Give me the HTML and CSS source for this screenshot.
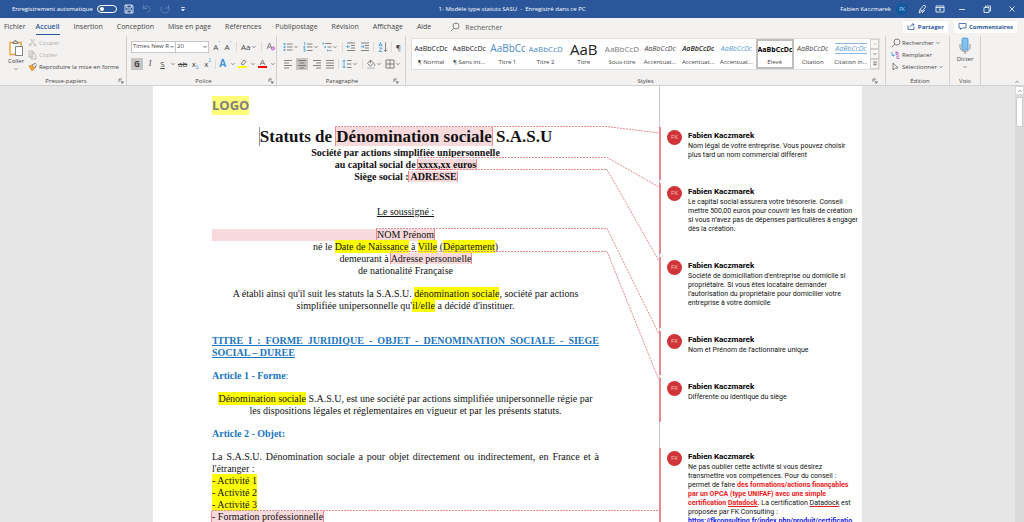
FILE: index.html
```
<!DOCTYPE html>
<html lang="fr">
<head>
<meta charset="utf-8">
<title>1- Modèle type statuts SASU</title>
<link rel="stylesheet" href="styles.css">
</head>
<body>
<svg class="defs" aria-hidden="true">
  <symbol id="chev" viewBox="0 0 6 6"><path d="M1.5 2.2 3 3.7 4.500 2.200"/></symbol>
  <symbol id="launch" viewBox="0 0 6 6"><path d="M1 4V1h3M2.500 2.500 5 5M5 3v2H3"/></symbol>
  <symbol id="list" viewBox="0 0 10 10"><path class="b" d="M.5 2h2M.5 5h2M.5 8h2" stroke-width="1.600"/><path d="M4 2h5.500M4 5h5.500M4 8h5.500"/></symbol>
  <symbol id="num" viewBox="0 0 10 10"><path class="b" d="M1 .5h.8v2.500M.6 4.500h1.500L.6 6h1.600M.6 7.300h1.500v2H.6"/><path d="M4 2h5.500M4 5h5.500M4 8.500h5.500"/></symbol>
  <symbol id="multi" viewBox="0 0 10 10"><path class="b" d="M.5 1.500h1.500M2.500 5h1.500M5 8.500h1.500" stroke-width="1.500"/><path d="M3 1.500h6.500M5.500 5h4M7.500 8.500h2"/></symbol>
  <symbol id="outdent" viewBox="0 0 10 10"><path d="M1 1h8M5 3.500h4M5 6h4M1 8.500h8"/><path class="b" d="M4 4.700H.8M2.300 3.200.8 4.700l1.500 1.500"/></symbol>
  <symbol id="indent" viewBox="0 0 10 10"><path d="M1 1h8M5 3.500h4M5 6h4M1 8.500h8"/><path class="b" d="M.8 4.700H4M2.500 3.200 4 4.700 2.500 6.200"/></symbol>
  <symbol id="sort" viewBox="0 0 10 10"><path class="b" d="M.8 4.500 2.500.5l1.700 4M1.300 3.200h2.400M1 6h3L1 9.500h3.200"/><path d="M7.500.5v9M5.800 7.700l1.700 1.800 1.700-1.800"/></symbol>
  <symbol id="al" viewBox="0 0 10 10"><path d="M1 1.500h8M1 4h5M1 6.500h8M1 9h5"/></symbol>
  <symbol id="ac" viewBox="0 0 10 10"><path d="M1 1.500h8M2.500 4h5M1 6.500h8M2.500 9h5"/></symbol>
  <symbol id="ar" viewBox="0 0 10 10"><path d="M1 1.500h8M4 4h5M1 6.500h8M4 9h5"/></symbol>
  <symbol id="aj" viewBox="0 0 10 10"><path d="M1 1.500h8M1 4h8M1 6.500h8M1 9h8"/></symbol>
  <symbol id="space" viewBox="0 0 10 10"><path class="b" d="M2 1v8M.6 2.500 2 1l1.400 1.500M.6 7.500 2 9l1.400-1.500"/><path d="M5 1.500h4.500M5 5h4.500M5 8.500h4.500"/></symbol>
  <symbol id="bucket" viewBox="0 0 10 10"><path d="M4.500 1 1.500 4.500l3 2.800 3-3.300zM4.500 1v3M8 4.500c1 1.500 1 2 .4 2.400"/><path d="M1 9.200h8" stroke="#c8c8c8" stroke-width="1.400"/></symbol>
  <symbol id="grid" viewBox="0 0 10 10"><path d="M1 1h8v8H1zM5 1v8M1 5h8"/></symbol>
  <symbol id="lens" viewBox="0 0 10 10"><circle cx="6" cy="4" r="3"/><path d="M3.800 6.200.8 9.200"/></symbol>
</svg>

<header class="titlebar">
  <div class="quick">
    <label class="autosave">Enregistrement automatique <input type="checkbox" class="toggle"></label>
    <button class="tb" aria-label="Enregistrer"><svg viewBox="0 0 10 10"><path d="M1 1h7l1 1v7H1zM2.800 1v3h4.500V1M2.800 9V6h4.500v3"/></svg></button>
    <button class="tb dim" aria-label="Annuler"><svg viewBox="0 0 10 10"><path d="M1.500 1v3.500H5M1.500 4.500C3 1.500 8 1.500 8 5c0 2-2 3-3 4"/></svg></button>
    <button class="tb dim" aria-label="Rétablir"><svg viewBox="0 0 10 10"><path d="M8.500 1v3H5.500M2 2.500C-.5 6 2 9 5 9c3.500 0 5-4 3-6"/></svg></button>
    <button class="tb" aria-label="Personnaliser"><svg viewBox="0 0 10 10"><path d="M3.200 3.500h3.600M3.500 5.500 5 7l1.500-1.500z"/></svg></button>
  </div>
  <div class="doctitle">1- Modèle type statuts SASU&nbsp; -&nbsp; Enregistré dans ce PC</div>
  <div class="account">
    <span>Fabien Kaczmarek</span><span class="me">FK</span>
    <button class="tb" aria-label="Stylet"><svg viewBox="0 0 10 10"><path d="M2 9 3 5.500 7 1l2 1.500L5.500 7zM3 5.500 5.500 7M5 9l3-3"/></svg></button>
    <button class="tb" aria-label="Options du ruban"><svg viewBox="0 0 10 10"><path d="M1 2h8v6H1zM1 3.500h8M5 7V4.700M4 5.700l1-1 1 1"/></svg></button>
    <button class="win" aria-label="Réduire"><svg viewBox="0 0 10 10"><path d="M2 5.500h6"/></svg></button>
    <button class="win" aria-label="Restaurer"><svg viewBox="0 0 10 10"><path d="M2 3.500h5v5H2zM3.500 3.500V2h5v5H7"/></svg></button>
    <button class="win" aria-label="Fermer"><svg viewBox="0 0 10 10"><path d="m2.500 2.500 5 5M7.500 2.500l-5 5"/></svg></button>
  </div>
</header>

<nav class="tabs">
  <button class="file">Fichier</button><button class="on">Accueil</button><button>Insertion</button><button>Conception</button><button>Mise en page</button><button>Références</button><button>Publipostage</button><button>Révision</button><button>Affichage</button><button>Aide</button>
  <label class="search"><svg class="i"><use href="#lens"/></svg><input type="text" placeholder="Rechercher" aria-label="Rechercher"></label>
  <div class="share">
    <button><svg class="i"><path d="M1 3.500v4h6v-3M3 5.500c0-2 1.500-3 4-3M5.500 1 7 2.500 5.500 4"/></svg>Partager</button>
    <button><svg class="i"><path d="M1 1.500h7v4.500H4L2.500 7.500V6H1z"/></svg>Commentaires</button>
  </div>
</nav>

<section class="ribbon">
  <div class="group clip">
    <div class="body">
      <button class="big"><svg viewBox="0 0 16 18"><path d="M2 3.500h11v12H2z" stroke="#eda23c" stroke-width="1.500" fill="#fbfbfb"/><path d="M5 4.500V3h1.500L7.500 1l1 2H10v1.500z" fill="#ddd"/><path d="M7.500 7.500h7v9h-7z" fill="#fff"/></svg>Coller<svg class="c"><use href="#chev"/></svg></button>
      <div class="rows">
        <button class="off"><svg class="i"><path d="M2.500 1 6 6M6.500 1 3 6"/><circle cx="2" cy="7" r="1"/><circle cx="7" cy="7" r="1"/></svg>Couper</button>
        <button class="off"><svg class="i"><path d="M1 1h4v6H1zM3 3h3l2 2v4H3z"/></svg>Copier</button>
        <button><svg class="i"><path d="m1 4 3-1 3 3-3 3z" fill="#eda23c" stroke="#e08a2a"/><path d="m4 3 4-2M7 6l1.500-3.500" stroke="#555"/></svg>Reproduire la mise en forme</button>
      </div>
    </div>
    <footer>Presse-papiers<svg class="c l"><use href="#launch"/></svg></footer>
  </div>

  <div class="group font">
    <div class="body stack">
      <div class="row">
        <div class="combo"><select class="fam" aria-label="Police"><option>Times New R</option></select><select class="size" aria-label="Taille"><option>20</option></select></div>
        <button>A<sup>ˆ</sup></button><button>A<sup>ˇ</sup></button><i class="sep"></i><button>Aa<svg class="c"><use href="#chev"/></svg></button><i class="sep"></i><button aria-label="Effacer la mise en forme"><svg class="i"><path d="M1 7 3.500 1 6 7M2 5h3"/><path d="m5 7 2-2.500L9 6 7.300 8.200z" fill="#e3a9e6" stroke="#b55fc0"/></svg></button>
      </div>
      <div class="row even">
        <button class="sel"><b>G</b></button><button><em class="serif">I</em></button><button><u>S</u></button><button class="drop" aria-label="Soulignement"><svg class="c"><use href="#chev"/></svg></button><button><s>ab</s></button><button>x<sub>2</sub></button><button>x<sup>2</sup></button><i class="sep"></i><button class="fx">A</button><svg class="c"><use href="#chev"/></svg><button aria-label="Surlignage"><svg class="i"><path d="m3 5 3-4 2 1.500L5 6z"/><path d="M0 8h9" stroke="#ff0" stroke-width="2"/></svg></button><svg class="c"><use href="#chev"/></svg><button aria-label="Couleur"><svg class="i"><path d="M2 6 4.500 1 7 6M3 4.300h3"/><path d="M0 8h9" stroke="#f00" stroke-width="2"/></svg></button><svg class="c"><use href="#chev"/></svg>
      </div>
    </div>
    <footer>Police<svg class="c l"><use href="#launch"/></svg></footer>
  </div>

  <div class="group para">
    <div class="body stack">
      <div class="row">
        <button><svg class="i"><use href="#list"/></svg><svg class="c"><use href="#chev"/></svg></button>
        <button><svg class="i"><use href="#num"/></svg><svg class="c"><use href="#chev"/></svg></button>
        <button><svg class="i"><use href="#multi"/></svg><svg class="c"><use href="#chev"/></svg></button><i class="sep"></i>
        <button><svg class="i"><use href="#outdent"/></svg></button><button><svg class="i"><use href="#indent"/></svg></button><i class="sep"></i>
        <button><svg class="i"><use href="#sort"/></svg></button><i class="sep"></i><button class="pil">¶</button>
      </div>
      <div class="row">
        <button><svg class="i"><use href="#al"/></svg></button><button class="sel"><svg class="i"><use href="#ac"/></svg></button><button><svg class="i"><use href="#ar"/></svg></button><button><svg class="i"><use href="#aj"/></svg></button><i class="sep"></i>
        <button><svg class="i"><use href="#space"/></svg><svg class="c"><use href="#chev"/></svg></button><i class="sep"></i>
        <button><svg class="i"><use href="#bucket"/></svg><svg class="c"><use href="#chev"/></svg></button>
        <button><svg class="i"><use href="#grid"/></svg><svg class="c"><use href="#chev"/></svg></button>
      </div>
    </div>
    <footer>Paragraphe<svg class="c l"><use href="#launch"/></svg></footer>
  </div>

  <div class="group styles">
    <div class="gallery">
      <button><span>AaBbCcDc</span>¶ Normal</button>
      <button><span>AaBbCcDc</span>¶ Sans int...</button>
      <button><span class="t1">AaBbCc</span>Titre 1</button>
      <button><span class="t2">AaBbCcD</span>Titre 2</button>
      <button><span class="t0">AaB</span>Titre</button>
      <button><span class="st">AaBbCcD</span>Sous-titre</button>
      <button><span class="it">AaBbCcDc</span>Accentuat...</button>
      <button><span class="it dk">AaBbCcDc</span>Accentuat...</button>
      <button><span class="it bl">AaBbCcDc</span>Accentuat...</button>
      <button class="cur"><span class="bd">AaBbCcDc</span>Élevé</button>
      <button><span class="it">AaBbCcDc</span>Citation</button>
      <button><span class="it bl rule">AaBbCcDc</span>Citation in...</button>
      <div class="spin"><button class="off" aria-label="Haut"><svg class="c up"><use href="#chev"/></svg></button><button aria-label="Bas"><svg class="c"><use href="#chev"/></svg></button><button aria-label="Autres"><svg class="c"><path d="M1 1h4M1.500 3 3 4.500 4.500 3z"/></svg></button></div>
    </div>
    <footer>Styles<svg class="c l"><use href="#launch"/></svg></footer>
  </div>

  <div class="group edit">
    <div class="rows">
      <button><svg class="i"><use href="#lens"/></svg>Rechercher<svg class="c"><use href="#chev"/></svg></button>
      <button><svg class="i"><path d="M1 2v3.500h2.500M2.500 4.500l1 1-1 1" class="b"/><path d="M5 1v3.500h2v-2H5M8.500 6H6v2.500h2.500" stroke="#a85bb8"/></svg>Remplacer</button>
      <button><svg class="i"><path d="m2 1 5 5H4.500L2 8z"/></svg>Sélectionner<svg class="c"><use href="#chev"/></svg></button>
    </div>
    <footer>Édition</footer>
  </div>

  <div class="group voice">
    <button class="big"><svg viewBox="0 0 16 18"><path d="M3 7v3c0 6 10 6 10 0V7M8 14.500V17" stroke="#777"/><rect x="5" y="1" width="6" height="12" rx="1.500" fill="#83c1ec" stroke="#3f8fce"/></svg>Dicter<svg class="c"><use href="#chev"/></svg></button>
    <footer>Voix</footer>
  </div>
  <div class="fold"><button aria-label="Réduire le ruban"><svg class="c up"><use href="#chev"/></svg></button></div>
</section>

<main class="work">
  <div class="canvas">
    <article class="page">
      <div class="text">
        <p class="logo"><mark>LOGO</mark></p>
        <h1><span class="caret"></span>Statuts de <span class="note">Dénomination sociale</span> S.A.S.U</h1>
        <p class="mid strong tight">Société par actions simplifiée unipersonnelle<br>au capital social de <span class="note"><span class="typo">xxxx,xx</span> euros</span><br>Siège social :<span class="note"> ADRESSE</span></p>
        <p class="mid wide"><u>Le soussigné :</u></p>
        <p class="filled"><span class="note">NOM Prénom</span></p>
        <p class="mid tight">né le <mark>Date de Naissance</mark> à <mark>Ville</mark> (<mark>Département</mark>)<br>demeurant à <span class="note">Adresse personnelle</span><br>de nationalité Française</p>
        <p class="mid">A établi ainsi qu'il suit les statuts la S.A.S.U. <mark>dénomination sociale</mark>, société par actions<br>simplifiée unipersonnelle qu'<mark>il/elle</mark> a décidé d'instituer.</p>
        <h2 class="wide">TITRE I : FORME JURIDIQUE - OBJET - DENOMINATION SOCIALE - SIEGE SOCIAL – DUREE</h2>
        <h3>Article 1 - Forme<span>:</span></h3>
        <p class="mid"><mark>Dénomination sociale</mark> S.A.S.U, est une société par actions simplifiée unipersonnelle régie par<br>les dispositions légales et réglementaires en vigueur et par les présents statuts.</p>
        <h3>Article 2 - Objet:</h3>
        <p class="full">La S.A.S.U. Dénomination sociale a pour objet directement ou indirectement, en France et à l'étranger :</p>
        <p class="tight"><mark>- Activité 1</mark><br><mark>- Activité 2</mark><br><mark>- Activité 3</mark><br><span class="note">- Formation professionnelle</span></p>
      </div>
      <aside class="comments">
        <section><b class="av">FK</b><div><h4>Fabien Kaczmarek</h4>Nom légal de votre entreprise. Vous pouvez choisir<br>plus tard un nom commercial différent</div></section>
        <section><b class="av">FK</b><div><h4>Fabien Kaczmarek</h4>Le capital social assurera votre trésorerie. Conseil<br>mettre 500,00 euros pour couvrir les frais de création<br>si vous n’avez pas de dépenses particulières à engager<br>dès la création.</div></section>
        <section><b class="av">FK</b><div><h4>Fabien Kaczmarek</h4>Société de domiciliation d'entreprise ou domicile si<br>propriétaire. Si vous êtes locataire demander<br>l’autorisation du propriétaire pour domicilier votre<br>entreprise à votre domicile</div></section>
        <section><b class="av">FK</b><div><h4>Fabien Kaczmarek</h4>Nom et Prénom de l’actionnaire unique</div></section>
        <section><b class="av">FK</b><div><h4>Fabien Kaczmarek</h4>Différente ou identique du siège</div></section>
        <section class="later"><b class="av">FK</b><div><h4>Fabien Kaczmarek</h4>Ne pas oublier cette activité si vous désirez<br>transmettre vos compétences. Pour du conseil :<br>permet de faire <strong>des formations/actions finançables<br>par un OPCA (type UNIFAF) avec une simple<br>certification <span class="typo">Datadock</span>.</strong> La certification <span class="typo">Datadock</span> est<br>proposée par FK Consulting :<br><a href="#">https://fkconsulting.fr/index.php/produit/certificatio</a></div></section>
      </aside>
      <svg class="leaders" aria-hidden="true"><path d="M182 40.500H454L506 47M265 71.500H454L506 101M256 83.500H454L506 175M223 142.500H454L506 248M238 165.500H454L506 294M59 424.500H506"/></svg>
    </article>
  </div>
  <div class="scroll"><button aria-label="Défiler vers le haut"><svg class="c up"><use href="#chev"/></svg></button><div class="thumb"></div></div>
</main>
</body>
</html>
```
FILE: styles.css
```
* { box-sizing: border-box; }
body { margin: 0; height: 100vh; overflow: hidden; display: flex; flex-direction: column; background: #e6e6e6; color: #444; font: 6px/9px "Open Sans", "Noto Sans", sans-serif; }
button, input, select { font: inherit; color: inherit; background: none; border: 0; padding: 0; margin: 0; }
button { display: flex; align-items: center; justify-content: center; white-space: nowrap; }
p, h1, h2, h3, h4 { margin: 0; font-size: inherit; }
svg { fill: none; stroke: #666; stroke-width: 0.8; flex: none; }
svg .b { stroke: #3a96dd; }
.defs { position: absolute; width: 0; height: 0; }
.i { width: 10px; height: 10px; }
.c { width: 6px; height: 6px; }
.up { transform: rotate(180deg); }

.titlebar { flex: none; height: 18px; display: grid; grid-template-columns: 1fr auto 1fr; align-items: center; background: #2b579a; color: #fff; }
.titlebar svg { width: 10px; height: 10px; stroke: #fff; }
.quick, .account { display: flex; align-items: center; }
.quick { padding-left: 12px; }
.autosave { display: flex; align-items: center; gap: 4px; margin-right: 3px; }
.toggle { appearance: none; width: 20px; height: 8px; border: 1px solid #fff; border-radius: 4px; display: flex; align-items: center; padding-left: 2px; }
.toggle::before { content: ""; width: 4px; height: 4px; border-radius: 50%; background: #fff; }
.tb { width: 18px; }
.dim { opacity: 0.3; }
.account { justify-content: flex-end; }
.me { width: 12px; height: 12px; margin: 0 5px; border-radius: 50%; background: #11599f; color: #b9d8f4; line-height: 12px; text-align: center; font-size: 5px; }
.win { width: 25px; }

.tabs { flex: none; height: 18px; display: flex; align-items: center; gap: 14px; padding: 0 7px 0 4px; background: #f3f2f1; font-size: 7px; }
.tabs > button { height: 15px; border-bottom: 1px solid transparent; }
.tabs .file { margin-right: -4px; }
.tabs .on { color: #2b579a; font-weight: 600; border-bottom-color: #2b579a; }
.search { display: flex; align-items: center; gap: 5px; margin-left: 5px; }
.search input { width: 60px; }
.search input::placeholder { color: #555; }
.share { display: flex; gap: 6px; margin-left: auto; }
.share button { gap: 1px; height: 12px; padding: 0 4px; background: #fff; border-radius: 1px; color: #2b579a; font-size: 6px; font-weight: 700; }
.share svg { stroke: #2b579a; }

.ribbon { flex: none; height: 50px; display: flex; background: #f3f2f1; border-bottom: 1px solid #d2d0ce; }
.group { display: flex; flex-direction: column; justify-content: space-between; border-right: 1px solid #d2d0ce; padding: 1px 0 0 6px; }
.group footer { position: relative; line-height: 8px; text-align: center; }
.l { position: absolute; right: 2px; bottom: 1px; }
.body { display: flex; }
.clip { width: 127px; }
.big { flex-direction: column; width: 20px; }
.big svg:first-child { width: 16px; height: 18px; }
.rows { display: flex; flex-direction: column; align-items: flex-start; }
.rows button { height: 12px; gap: 1px; }
.clip .rows { padding-left: 2px; }
.off { color: #b1afad; }
.off svg { stroke: #b1afad; }
.font { width: 150px; padding-left: 4px; }
.stack { flex-direction: column; gap: 4px; padding-top: 3px; }
.row { display: flex; align-items: center; height: 13px; justify-content: space-between; }
.font .row { font-size: 8px; }
.combo { display: flex; font-size: 6px; }
.combo select { height: 12px; border: 1px solid #c8c6c4; padding: 0 1px; background: #fff url("data:image/svg+xml,%3Csvg xmlns='http://www.w3.org/2000/svg' width='6' height='6' fill='none' stroke='%23666'%3E%3Cpath d='M1.500 2 3 3.500 4.500 2'/%3E%3C/svg%3E") no-repeat right center; appearance: none; border-radius: 0; }
.combo .fam { width: 45px; }
.combo .size { width: 33px; border-left: 0; }
.row button { height: 12px; }
.even button { width: 11px; }
.even .drop { width: 6px; }
.row .sel { min-width: 12px; background: #c8c6c4; }
.serif { font-family: "Liberation Serif", serif; }
.sep { width: 1px; height: 10px; background: #dcdad8; }
sup, sub { font-size: 5px; line-height: 5px; color: #3a96dd; }
sup { align-self: flex-start; }
sub { align-self: flex-end; }
.row .fx { color: #3a96dd; font-size: 10px; font-weight: 700; }
.para { width: 129px; padding-right: 4px; }
.pil { font-size: 8px; }
.styles { flex: 1; min-width: 0; padding: 2px 5px 0 5px; }
.gallery { height: 32px; display: grid; grid-template-columns: repeat(12, minmax(0, 1fr)) 9px; background: #fff; border: 1px solid #e1dfdd; }
.gallery > button { flex-direction: column; justify-content: space-between; padding: 0 2px 2px; overflow: hidden; }
.gallery span { display: flex; align-items: center; height: 20px; max-width: 100%; overflow: hidden; font-size: 7px; color: #222; }
.gallery .t1 { font-size: 10px; color: #4a8ac6; }
.gallery .t2 { font-size: 8px; color: #4a8ac6; }
.gallery .t0 { font-size: 15px; line-height: 20px; }
.gallery .st { font-size: 8px; color: #777; }
.gallery .it { font-style: italic; color: #444; }
.gallery .dk { font-weight: 600; color: #222; }
.gallery .bl { color: #5b9bd5; }
.gallery .bd { font-weight: 700; color: #000; }
.gallery .rule { height: 11px; margin-top: 4px; border: solid #8ab8e2; border-width: 1px 0; }
.gallery > .cur { border: 2px solid #c0bebc; padding: 0; }
.cur span { height: 19px; }
.spin { display: grid; grid-template-rows: repeat(3, 1fr); }
.spin button { border: 1px solid #d2d0ce; background: #f8f7f6; }
.edit { width: 64px; padding-left: 5px; }
.voice { width: 31px; padding-left: 0; align-items: center; }
.fold { flex: none; width: 43px; display: flex; align-items: flex-end; justify-content: flex-end; padding-right: 4px; }

.work { flex: 1; min-height: 0; display: flex; }
.canvas { flex: 1; display: flex; justify-content: center; overflow: hidden; }
.page { position: relative; flex: 0 1 709px; display: flex; justify-content: space-between; background: #fff; color: #111; }
.text { width: 387px; margin-left: 59px; padding-top: 10px; font: 10px/12px "Liberation Serif", serif; }
.text p, .text h2, .text h3 { margin-top: 11px; }
.text .wide { margin-top: 23px; }
.text .tight { margin-top: 0; }
.text .logo { margin-top: 0; font: 700 14px/19px "Open Sans", sans-serif; }
.text .logo { font-size: 13px; }
mark { background: #ff0; color: inherit; padding: 1px 0; }
.logo mark { display: inline-block; padding: 0; background: #ffff7a; color: #7f7f7f; }
.text h1 { margin-top: 11px; text-align: center; font-size: 17px; line-height: 21px; white-space: nowrap; }
.caret { border-left: 1px solid #999; }
.mid { text-align: center; white-space: nowrap; }
.strong { font-weight: 700; }
.note { background: #f8dadd; box-shadow: 1px 0 #e58a90, -1px 0 #e58a90; }
.typo { text-decoration: underline; text-decoration-color: #e02020; }
.filled { display: grid; grid-template-columns: 1fr auto 1fr; }
.filled::before { content: ""; background: #f8dadd; }
.text h2, .text h3 { color: #1b75c0; }
.text h2 { text-align: justify; text-decoration: underline; }
.text h3 span { font-weight: 400; }
.full { text-align: justify; }

.comments { width: 203px; padding-top: 41px; background: linear-gradient(90deg, #c8c8c8 1px, transparent 1px); font: 7px/9px Roboto, sans-serif; white-space: nowrap; overflow: hidden; }
.comments section { display: flex; gap: 6px; margin-bottom: 3px; padding: 3px 0 20px 6px; border-left: 2px solid #e58a90; }
.comments .later { margin-top: 26px; }
.comments h4 { font-size: 8px; line-height: 12px; color: #000; }
.comments strong { color: #f01818; }
.comments a { color: #2222e0; font-weight: 700; }
.av { width: 15px; height: 15px; border-radius: 50%; background: #d13438; color: #f5c6c8; font: 6px/15px "Open Sans", sans-serif; text-align: center; }
.leaders { position: absolute; left: 0; top: 0; width: 100%; height: 100%; stroke: #e58a90; stroke-width: 1; stroke-dasharray: 2 1; pointer-events: none; }

.scroll { width: 9px; background: #dadada; padding: 1px; display: flex; flex-direction: column; gap: 3px; }
.scroll button { height: 7px; background: #fff; }
.thumb { height: 30px; background: #fff; border: 1px solid #ccc; }
```
